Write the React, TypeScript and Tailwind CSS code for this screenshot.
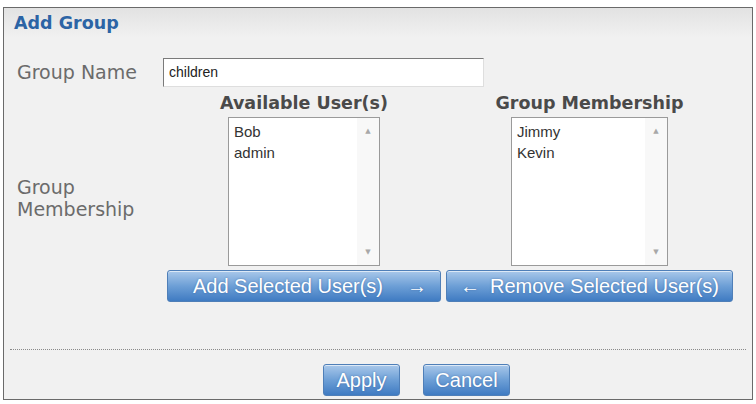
import React from "react";

const sans = { fontFamily: "'Liberation Sans', Arial, sans-serif" };

function BlueButton({ children, className = "" }: { children: React.ReactNode; className?: string }) {
  return (
    <div
      className={
        "flex h-[32px] items-center justify-center rounded-[3px] border border-[#4f7fb8] bg-gradient-to-b from-[#a9c8ea] via-[#6d9fd6] to-[#3f7bc2] text-[20px] text-white shadow-[inset_0_1px_0_rgba(255,255,255,0.6)] [text-shadow:0_0_2px_rgba(40,80,140,0.6)] " +
        className
      }
      style={sans}
    >
      {children}
    </div>
  );
}

function ListBox({ items, width }: { items: string[]; width: string }) {
  return (
    <div className={"mt-[4px] flex h-[149px] border border-[#9a9a9a] bg-white " + width}>
      <div className="flex-1 pl-[5px] pt-[3px] text-[15px] leading-[21px] text-[#333]" style={sans}>
        {items.map((i) => (
          <div key={i}>{i}</div>
        ))}
      </div>
      <div className="flex w-[22px] flex-col items-center justify-between bg-[#f8f8f8] py-[8px] text-[7px] text-[#a8a8a8]">
        <span>▲</span>
        <span>▼</span>
      </div>
    </div>
  );
}

export default function App() {
  const verdana = { fontFamily: "'DejaVu Sans', Verdana, sans-serif" };
  return (
    <div className="h-[404px] w-[756px] bg-white pl-[3px] pt-[7px]" style={verdana}>
      <div className="h-[393px] w-[750px] border border-[#6a6a6a] bg-[#f1f1f1]">
        <div className="flex h-[30px] items-center bg-gradient-to-b from-[#e2e2e2] to-[#f1f1f1] pl-[10px] text-[17.5px] font-bold text-[#2c64a5]">
          Add Group
        </div>

        <div className="mt-[20px] grid grid-cols-[159px_1fr]">
          <div className="flex items-center pl-[13px] text-[19px] text-[#6b6b6b]">Group Name</div>
          <div className="h-[29px] w-[321px] border border-t-[#7a7a7a] border-l-[#7a7a7a] border-r-[#dedede] border-b-[#dedede] bg-white pl-[5px] text-[14px] leading-[27px] text-[#222]" style={sans}>
            children
          </div>

          <div className="mt-[6px] flex items-center pl-[13px] text-[19px] leading-[22px] text-[#6b6b6b]">
            Group
            <br />
            Membership
          </div>
          <div className="mt-[6px] ml-[4px] flex gap-[5px]">
            <div className="flex w-[274px] flex-col items-center">
              <div className="h-[20px] text-[17.5px] font-bold leading-[20px] text-[#4a4a4a]">Available User(s)</div>
              <ListBox items={["Bob", "admin"]} width="w-[152px]" />
              <BlueButton className="mt-[4px] w-full pl-[12px]">
                <span>Add Selected User(s)</span>
                <span className="ml-[24px]">→</span>
              </BlueButton>
            </div>
            <div className="flex w-[287px] flex-col items-center">
              <div className="h-[20px] text-[17.5px] font-bold leading-[20px] text-[#4a4a4a]">Group Membership</div>
              <ListBox items={["Jimmy", "Kevin"]} width="w-[157px]" />
              <BlueButton className="mt-[4px] w-full">
                <span className="mr-[10px]">←</span>
                <span>Remove Selected User(s)</span>
              </BlueButton>
            </div>
          </div>
        </div>

        <div className="mx-[6px] mt-[47px] border-t border-dotted border-[#8a8a8a]" />

        <div className="ml-[319px] mt-[14px] flex gap-[23px]">
          <BlueButton className="w-[77px]">Apply</BlueButton>
          <BlueButton className="w-[87px]">Cancel</BlueButton>
        </div>
      </div>
    </div>
  );
}
